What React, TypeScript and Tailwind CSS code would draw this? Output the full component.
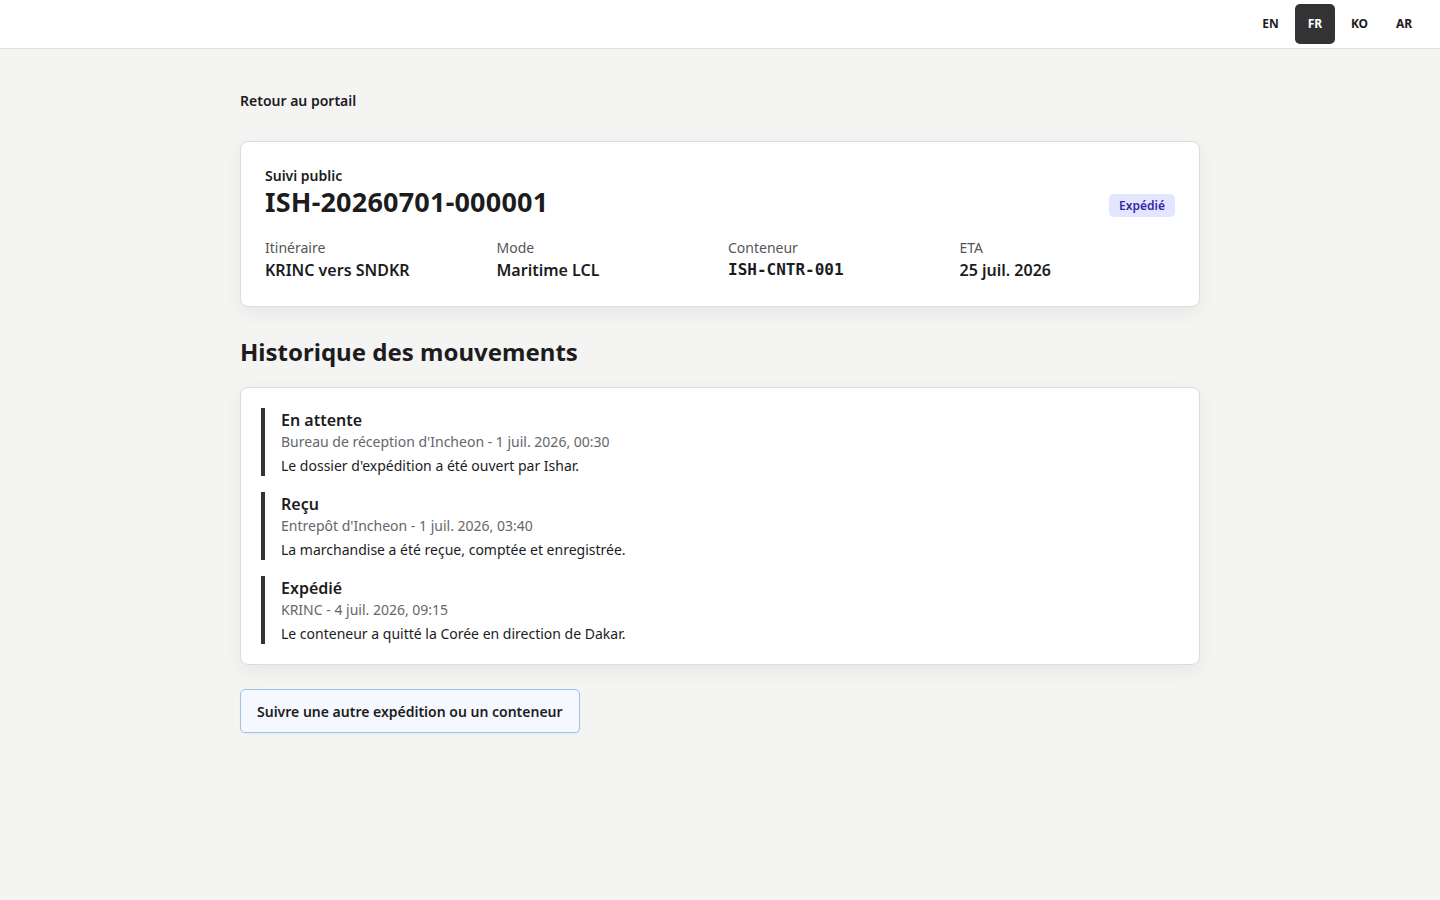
const events = [
  {
    title: 'En attente',
    meta: "Bureau de réception d'Incheon - 1 juil. 2026, 00:30",
    note: "Le dossier d'expédition a été ouvert par Ishar.",
  },
  {
    title: 'Reçu',
    meta: "Entrepôt d'Incheon - 1 juil. 2026, 03:40",
    note: 'La marchandise a été reçue, comptée et enregistrée.',
  },
  {
    title: 'Expédié',
    meta: 'KRINC - 4 juil. 2026, 09:15',
    note: 'Le conteneur a quitté la Corée en direction de Dakar.',
  },
]

const langs = ['EN', 'FR', 'KO', 'AR']

export default function App() {
  return (
    <div className="min-h-screen bg-[#f4f4f3] text-[#1c1c1e] font-['Noto_Sans',sans-serif]">
      {/* Top bar */}
      <header className="h-[49px] bg-white border-b border-[#dedede] flex items-center justify-end pr-[16px] gap-[4.5px]">
        {langs.map((l) => (
          <button
            key={l}
            className={
              l === 'FR'
                ? 'w-[40px] h-[40px] rounded-[5px] bg-[#333335] text-white text-[12px] font-bold'
                : 'w-[40px] h-[40px] rounded-[5px] text-[#1c1c1e] text-[12px] font-bold'
            }
          >
            {l}
          </button>
        ))}
      </header>

      <main className="w-[960px] mx-auto pt-[40px] pb-16">
        <a className="block text-[14px] font-semibold leading-[24px]">Retour au portail</a>

        {/* Summary card */}
        <section className="mt-[28px] bg-white border border-[#dcdcdc] rounded-[8px] shadow-[0_6px_18px_rgba(0,0,0,0.06)] px-[24px] pt-[24px] pb-[24px]">
          <div className="flex items-end justify-between">
            <div>
              <p className="text-[14px] font-semibold leading-[20px]">Suivi public</p>
              <h1 className="text-[27px] font-bold leading-[32px] tracking-[0.2px]">ISH-20260701-000001</h1>
            </div>
            <span className="mb-[1px] rounded-[5px] bg-[#e3e6ff] text-[#3526a8] text-[12px] font-semibold px-[10px] py-[2px] leading-[19px]">
              Expédié
            </span>
          </div>
          <div className="grid grid-cols-4 gap-4 mt-[20px]">
            <div>
              <p className="text-[14px] text-[#555558] leading-[20px]">Itinéraire</p>
              <p className="text-[16px] font-semibold leading-[24px]">KRINC vers SNDKR</p>
            </div>
            <div>
              <p className="text-[14px] text-[#555558] leading-[20px]">Mode</p>
              <p className="text-[16px] font-semibold leading-[24px]">Maritime LCL</p>
            </div>
            <div>
              <p className="text-[14px] text-[#555558] leading-[20px]">Conteneur</p>
              <p className="text-[16px] font-bold leading-[24px] font-['DejaVu_Sans_Mono',monospace]">ISH-CNTR-001</p>
            </div>
            <div>
              <p className="text-[14px] text-[#555558] leading-[20px]">ETA</p>
              <p className="text-[16px] font-semibold leading-[24px]">25 juil. 2026</p>
            </div>
          </div>
        </section>

        <h2 className="mt-[29px] text-[24px] font-bold leading-[32px]">Historique des mouvements</h2>

        {/* Timeline */}
        <section className="mt-[19px] bg-white border border-[#dcdcdc] rounded-[8px] shadow-[0_6px_18px_rgba(0,0,0,0.06)] px-[20px] py-[20px] flex flex-col gap-[16px]">
          {events.map((e) => (
            <div key={e.title} className="border-l-[4px] border-[#333335] pl-[16px]">
              <p className="text-[16px] font-semibold leading-[24px]">{e.title}</p>
              <p className="text-[14px] text-[#66666a] leading-[20px]">{e.meta}</p>
              <p className="text-[14px] leading-[20px] mt-[4px]">{e.note}</p>
            </div>
          ))}
        </section>

        <button className="mt-[24px] h-[44px] px-[16px] rounded-[5px] border border-[#9ec3e8] bg-[#f5f9ff] text-[14px] font-semibold shadow-[0_1px_2px_rgba(0,0,0,0.05)]">
          Suivre une autre expédition ou un conteneur
        </button>
      </main>
    </div>
  )
}
